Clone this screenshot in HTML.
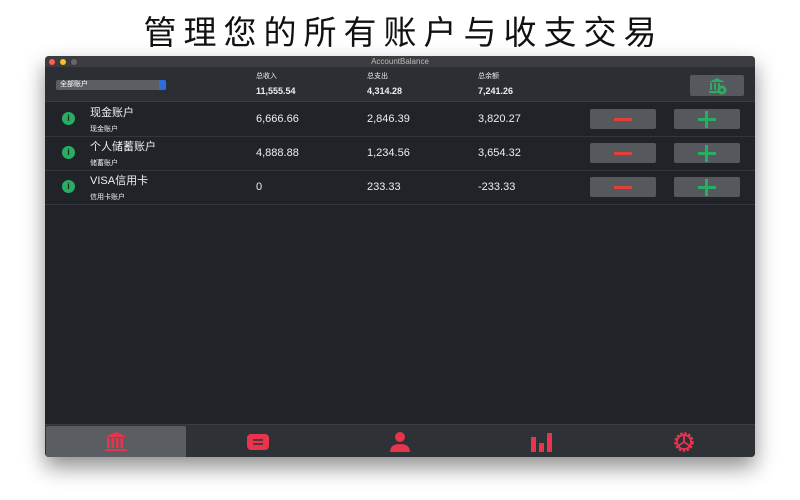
<!DOCTYPE html>
<html><head><meta charset="utf-8"><style>
body{margin:0;width:800px;height:500px;background:#fff;position:relative;overflow:hidden;font-family:"Liberation Sans","Noto Sans CJK SC",sans-serif}
.h{position:absolute;top:12px;left:0;width:800px;text-align:center;font-size:33px;letter-spacing:7px;color:#111;line-height:42px;padding-left:7px;box-sizing:border-box}
.win{position:absolute;left:45px;top:56px;width:710px;height:401px;background:#202328;box-shadow:0 10px 22px rgba(0,0,0,.45);border-radius:4px;overflow:hidden}
.tb{height:11px;background:#3a3c3f;color:#bbb;font-size:8px;text-align:center;line-height:11px;position:relative}
.d{position:absolute;top:3px;width:6px;height:6px;border-radius:50%}
.hd{position:absolute;top:11px;left:0;right:0;height:34px;background:#2b2e33;border-bottom:1px solid #3a3d42}
.t{position:absolute;color:#eee;white-space:nowrap}
.sel{position:absolute;left:11px;top:13px;width:110px;height:10px;background:#5b5e62;border-radius:2px;font-size:7px;color:#fff;line-height:10px;padding-left:4px;box-sizing:border-box}
.sel b{position:absolute;right:0;top:0;width:7px;height:10px;background:#2d6fd8;border-radius:0 2px 2px 0}
.row{position:absolute;left:0;right:0;height:34px;border-bottom:1px solid #33363b}
.i{position:absolute;left:17px;top:10px;width:13px;height:13px;border-radius:50%;background:#27ae60;color:#202328;font-size:9px;font-weight:bold;text-align:center;line-height:13px}
.btn{position:absolute;top:7px;width:66px;height:20px;background:#55585c;border-radius:2px}
.m{left:545px}.p{left:629px}
.m:after{content:"";position:absolute;left:24px;top:9px;width:18px;height:3px;background:#e0403a}
.p:before{content:"";position:absolute;left:24px;top:9px;width:18px;height:3px;background:#27ae60}
.p:after{content:"";position:absolute;left:31px;top:2px;width:3px;height:17px;background:#27ae60}
.tab{position:absolute;top:368px;left:0;right:0;height:33px;background:#2e3136;border-top:1px solid #3a3d42}
.ic{position:absolute;top:6px}
</style></head><body>
<div class="h">管理您的所有账户与收支交易</div>
<div class="win">
<div class="tb"><span class="d" style="left:4px;background:#fc5f57"></span><span class="d" style="left:15px;background:#fdbc2e"></span><span class="d" style="left:26px;background:#666"></span>AccountBalance</div>
<div class="hd">
<div class="sel">全部账户<b></b></div>
<div class="t" style="left:211px;top:4px;font-size:7px">总收入</div>
<div class="t" style="left:211px;top:19px;font-size:9px;font-weight:bold">11,555.54</div>
<div class="t" style="left:322px;top:4px;font-size:7px">总支出</div>
<div class="t" style="left:322px;top:19px;font-size:9px;font-weight:bold">4,314.28</div>
<div class="t" style="left:433px;top:4px;font-size:7px">总余额</div>
<div class="t" style="left:433px;top:19px;font-size:9px;font-weight:bold">7,241.26</div>
<div style="position:absolute;left:645px;top:8px;width:54px;height:21px;background:#55585c;border-radius:2px">
<svg width="54" height="21"><g fill="#27ae60"><path d="M19 7 L27 3 L35 7 Z"/><rect x="20" y="8" width="2" height="7"/><rect x="24" y="8" width="2" height="7"/><rect x="28" y="8" width="2" height="7"/><rect x="19" y="16" width="12" height="2"/><circle cx="32" cy="15" r="4.5"/></g><path d="M30 15h4M32 13v4" stroke="#55585c" stroke-width="1.3"/></svg></div>
</div>
<div class="row" style="top:46px"><div class="i">i</div><div class="t" style="left:45px;top:2px;font-size:11px">现金账户</div><div class="t" style="left:45px;top:22px;font-size:7px">现金账户</div><div class="t" style="left:211px;top:11px;font-size:11px">6,666.66</div><div class="t" style="left:322px;top:11px;font-size:11px">2,846.39</div><div class="t" style="left:433px;top:11px;font-size:11px">3,820.27</div><div class="btn m"></div><div class="btn p"></div></div>
<div class="row" style="top:80px"><div class="i">i</div><div class="t" style="left:45px;top:2px;font-size:11px">个人储蓄账户</div><div class="t" style="left:45px;top:22px;font-size:7px">储蓄账户</div><div class="t" style="left:211px;top:11px;font-size:11px">4,888.88</div><div class="t" style="left:322px;top:11px;font-size:11px">1,234.56</div><div class="t" style="left:433px;top:11px;font-size:11px">3,654.32</div><div class="btn m"></div><div class="btn p"></div></div>
<div class="row" style="top:114px"><div class="i">i</div><div class="t" style="left:45px;top:2px;font-size:11px">VISA信用卡</div><div class="t" style="left:45px;top:22px;font-size:7px">信用卡账户</div><div class="t" style="left:211px;top:11px;font-size:11px">0</div><div class="t" style="left:322px;top:11px;font-size:11px">233.33</div><div class="t" style="left:433px;top:11px;font-size:11px">-233.33</div><div class="btn m"></div><div class="btn p"></div></div>
<div class="tab">
<div style="position:absolute;left:1px;top:1px;width:140px;height:32px;background:#5a5d61;border-radius:2px"></div>
<svg class="ic" style="left:58px" width="26" height="22"><g fill="#e8354d"><path d="M2 6 L13 1 L24 6 Z"/><rect x="4" y="7" width="2.5" height="10"/><rect x="8.5" y="7" width="2.5" height="10"/><rect x="13" y="7" width="2.5" height="10"/><rect x="17.5" y="7" width="2.5" height="10"/><rect x="2" y="18" width="22" height="2"/></g></svg>
<svg class="ic" style="left:200px" width="26" height="22"><rect x="2" y="3" width="22" height="16" rx="4" fill="#e8354d"/><path d="M8 9h10M8 13h10" stroke="#2e3136" stroke-width="1.6"/></svg>
<svg class="ic" style="left:342px" width="26" height="22"><g fill="#e8354d"><circle cx="13" cy="6" r="5"/><path d="M3 21 Q3 13 13 13 Q23 13 23 21 Z"/></g></svg>
<svg class="ic" style="left:484px" width="26" height="22"><g fill="#e8354d"><rect x="2" y="6" width="5" height="15"/><rect x="10" y="12" width="5" height="9"/><rect x="18" y="2" width="5" height="19"/></g></svg>
<svg class="ic" style="left:626px" width="26" height="22"><circle cx="13" cy="11" r="8.5" fill="none" stroke="#e8354d" stroke-width="2.5" stroke-dasharray="2.5 1.5"/><circle cx="13" cy="11" r="7" fill="none" stroke="#e8354d" stroke-width="1.8"/><path d="M13 11V4M13 11l6 4M13 11l-6 4" stroke="#e8354d" stroke-width="1.8"/></svg>
</div>
</div>
</body></html>
